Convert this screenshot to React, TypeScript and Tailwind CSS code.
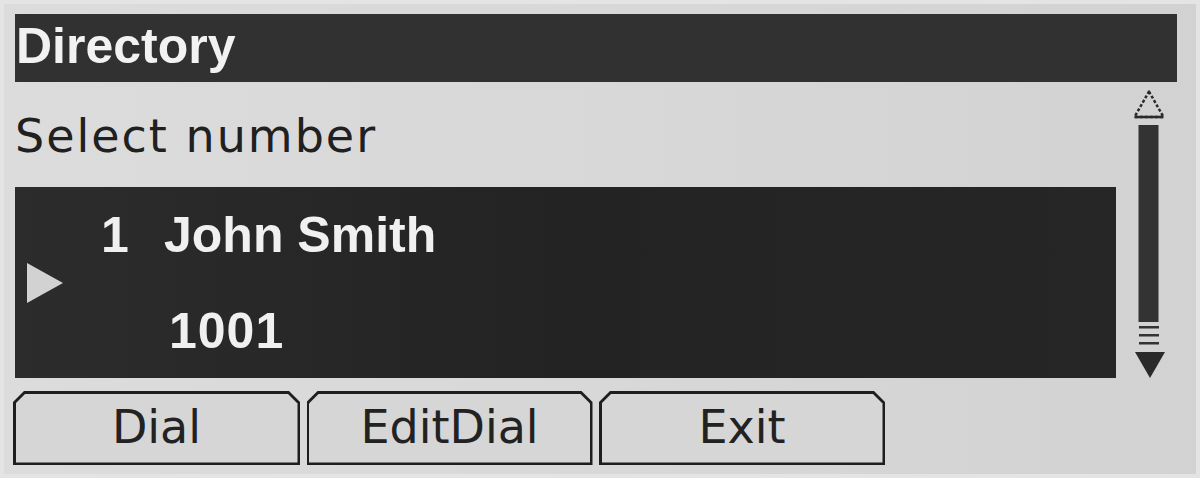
import React from 'react';

const chamfer =
  '[clip-path:polygon(11px_0,calc(100%-11px)_0,100%_11px,100%_100%,0_100%,0_11px)]';

function SoftKey({ label, width }: { label: string; width: string }) {
  return (
    <div className={`${width} h-[74px] bg-[#1e1e1e] p-[2.5px] ${chamfer}`}>
      <div className="w-full h-full bg-[#d6d6d6] [clip-path:polygon(10px_0,calc(100%-10px)_0,100%_10px,100%_100%,0_100%,0_10px)] flex items-center justify-center">
        <span className="text-[46px] leading-none text-[#222] font-['DejaVu_Sans',sans-serif] pb-[2px]">
          {label}
        </span>
      </div>
    </div>
  );
}

function ScrollBar() {
  return (
    <svg width="32" height="288" viewBox="0 0 32 288" className="block">
      {/* up arrow, outlined */}
      <polygon
        points="16,1.5 30.5,27 1.5,27"
        fill="none"
        stroke="#2a2a2a"
        strokeWidth="2.5"
        strokeDasharray="3 2"
        strokeLinejoin="round"
      />
      <line x1="1.5" y1="27" x2="30.5" y2="27" stroke="#2a2a2a" strokeWidth="2.5" />
      {/* thumb */}
      <rect x="5.5" y="35" width="20" height="197" fill="#333" />
      {/* grip lines */}
      <rect x="6" y="236" width="20" height="2.5" fill="#333" />
      <rect x="6" y="244" width="20" height="2.5" fill="#333" />
      <rect x="6" y="252" width="20" height="2.5" fill="#333" />
      {/* down arrow, filled */}
      <polygon points="2,262 32,262 17,288" fill="#2a2a2a" />
    </svg>
  );
}

export default function App() {
  return (
    <div className="w-[1200px] h-[478px] overflow-hidden bg-gradient-to-r from-[#dcdcdc] via-[#d8d8d8] to-[#d2d2d2] shadow-[inset_0_0_0_4px_#e4e4e4] pl-[15px] pt-[14px] flex flex-col">
      {/* title bar */}
      <div className="w-[1162px] h-[68px] bg-[#313131] text-[#f2f2f2] font-['Liberation_Sans',Arial,sans-serif] font-bold text-[50px] leading-[64px] pl-[1px]">
        Directory
      </div>

      <div className="flex">
        <div className="w-[1101px] flex flex-col">
          <div className="h-[105px] pt-[27px]">
            <div className="text-[46px] leading-[54px] tracking-[2px] text-[#202020] font-['DejaVu_Sans',sans-serif]">
              Select number
            </div>
          </div>

          {/* selected entry */}
          <div className="h-[191px] overflow-hidden bg-gradient-to-r from-[#2c2c2c] via-[#232323] to-[#262626] flex items-center pl-[12px]">
            <svg width="36" height="40" viewBox="0 0 36 40" className="block shrink-0">
              <polygon points="0,0 36,20 0,40" fill="#d2d2d2" />
            </svg>
            <div className="ml-[38px] grid grid-cols-[63px_1fr] text-[50px] leading-[96px] font-bold text-[#f0f0f0] font-['Liberation_Sans',Arial,sans-serif] self-start">
              <span>1</span>
              <span>John Smith</span>
              <span></span>
              <span className="pl-[5px] tracking-[1px]">1001</span>
            </div>
          </div>
        </div>

        <div className="ml-[17px] pt-[8px]">
          <ScrollBar />
        </div>
      </div>

      {/* soft keys */}
      <div className="-ml-[2px] mt-[13px] flex gap-[6.5px]">
        <SoftKey label="Dial" width="w-[287px]" />
        <SoftKey label="EditDial" width="w-[286px]" />
        <SoftKey label="Exit" width="w-[286px]" />
      </div>
    </div>
  );
}
